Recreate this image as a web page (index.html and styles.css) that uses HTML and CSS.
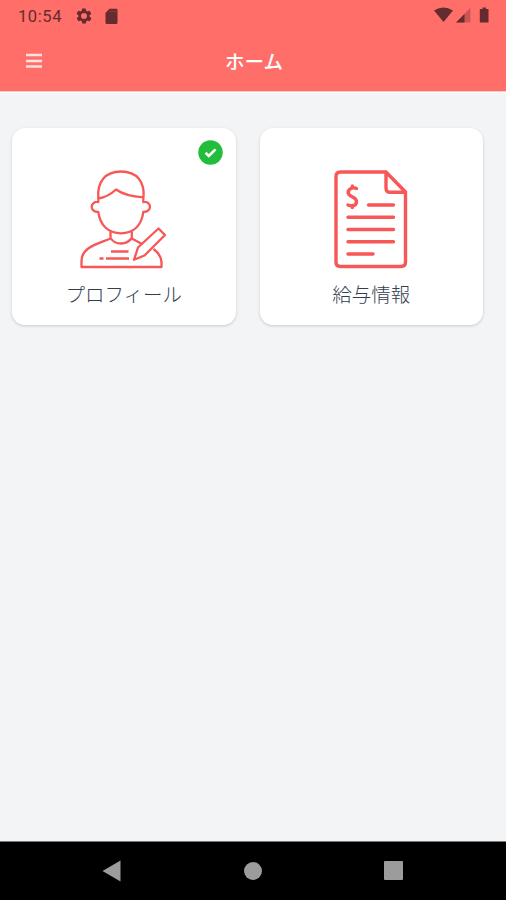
FILE: index.html
```html
<!DOCTYPE html>
<html lang="ja">
<head>
<meta charset="utf-8">
<title>ホーム</title>
<link rel="stylesheet" href="styles.css">
</head>
<body>
<div class="screen">
  <div class="status">
    <span class="time">10:54</span>
    <svg class="gear" width="18" height="18" viewBox="0 0 24 24"><path d="M19.4 13c0-.3.1-.6.1-1s0-.7-.1-1l2.1-1.600c.2-.2.3-.5.1-.7l-2-3.400c-.1-.2-.4-.3-.6-.2l-2.500 1c-.5-.4-1.100-.7-1.700-1l-.4-2.600c0-.3-.2-.5-.5-.5h-4c-.2 0-.4.2-.5.4l-.4 2.700c-.6.2-1.100.6-1.700 1l-2.500-1c-.2-.1-.5 0-.6.2l-2 3.400c-.1.200 0 .5.100.700L4.600 11c0 .3-.1.600-.1 1s0 .7.100 1l-2.100 1.600c-.2.200-.3.500-.1.700l2 3.400c.1.200.4.300.6.200l2.500-1c.5.400 1.100.7 1.700 1l.4 2.600c0 .300.200.500.500.500h4c.2 0 .5-.2.500-.5l.4-2.600c.6-.2 1.100-.6 1.700-1l2.500 1c.2.100.5 0 .6-.2l2-3.400c.1-.2.100-.5-.1-.7zM12 16a4 4 0 1 1 0-8 4 4 0 0 1 0 8z" fill-rule="evenodd"/></svg>
    <svg class="sd" width="13" height="17" viewBox="0 0 13 17"><path d="M4.500.800H11.200Q12.500.800 12.500 2V14.700Q12.500 16 11.200 16H1.800Q.500 16 .500 14.700V5z"/><path class="slots" d="M4.500 3.500H11.500"/></svg>
    <span class="spacer"></span>
    <svg width="56" height="18" viewBox="0 0 56 18">
      <path d="M0 3.500Q9.500-2.500 19 3.500L9.500 15z"/>
      <path class="dim" d="M36.300 1V15.500H22z"/><path d="M30.500 7V15.500H22z"/>
      <path d="M48.500.500H52V2H54.500V15.500H45.800V2H48.500z"/>
    </svg>
  </div>
  <header class="bar">
    <svg class="menu" width="16" height="16" viewBox="0 0 16 16"><path d="M0 2H16M0 8H16M0 13.500H16"/></svg>
    <h1>ホーム</h1>
  </header>
  <main class="cards">
    <section class="card">
      <svg class="art person" width="110" height="120" viewBox="0 0 110 120">
        <path d="M28.300 38C27 22 35 11.500 51 11.500S75 22 73.500 38M28.300 38.500Q38 37 46 29.500Q55 36 73.500 37.300M28.300 38V42C20 41 19 52 28.300 52C30 65 38 73.300 51 73.300S71.500 65 73.300 52C82.500 52 82 41 73.300 42V37"/>
        <path d="M40.500 71.500V78Q44 83.500 51 83.500T61.800 78V71.500M40.500 78.500C28 84 11.500 87 11.500 101V107H91.500V102Q91 94.500 83.500 89M61.800 78.500L72 84"/>
        <path d="M64 99.800L68 87.500L88.500 68.500L95 75L74.500 95.500Z"/>
        <path class="bars" d="M41 91.500H58.500M29.500 98.500H33.500M36 98.500H59"/>
      </svg>
      <p>プロフィール</p>
      <svg class="badge" width="25" height="25" viewBox="0 0 25 25"><circle cx="12.500" cy="12.500" r="12.200"/><path d="M7.500 12.800L10.800 16L17.500 9.300"/></svg>
    </section>
    <section class="card">
      <svg class="art paper" width="100" height="120" viewBox="0 0 100 120">
        <path d="M66 12H20.500Q16 12 16 16.500V102Q16 106.500 20.500 106.500H81Q85.500 106.500 85.500 102V32L66 12V28Q66 32.300 70.300 32.300H85"/>
        <path d="M48.500 45H73.500M28 57.300H73.500M28 69.500H73.500M28 81.800H73.500M28 94H53"/>
        <path d="M36.500 28.500C31 26 26.500 31 29 34.500C31 37.500 37 37 36.500 42C36 46.500 31 46.500 28 45M32.300 26V28M32.300 45.500V47.500"/>
      </svg>
      <p>給与情報</p>
    </section>
  </main>
  <nav class="nav">
    <svg width="20" height="22" viewBox="0 0 20 22"><path d="M.500 11L18.500.500V21.500z"/></svg>
    <svg width="18" height="18" viewBox="0 0 18 18"><circle cx="9" cy="9" r="9"/></svg>
    <svg width="19" height="19" viewBox="0 0 19 19"><rect width="19" height="19" rx="1"/></svg>
  </nav>
</div>
</body>
</html>
```
FILE: styles.css
```css
body { margin: 0; }
.screen {
  width: 506px;
  height: 900px;
  display: flex;
  flex-direction: column;
  background: #f2f4f6;
  font-family: "Noto Sans CJK JP", sans-serif;
}
svg { display: block; flex: none; }
.status {
  box-sizing: border-box;
  height: 32px;
  padding: 0 16px 0 18px;
  display: flex;
  align-items: center;
  background: #ff6e69;
  fill: #652b2e;
}
.time {
  width: 57px;
  font: 16.500px Roboto, sans-serif;
  letter-spacing: 0.600px;
  color: #652b2e;
}
.sd { margin-left: 12px; }
.slots { stroke: #a04443; stroke-width: 1.500; stroke-dasharray: 1 1; }
.spacer { flex: 1; }
.dim { opacity: 0.35; }
.bar {
  box-sizing: border-box;
  height: 60px;
  padding: 0 24px 2px 26px;
  display: grid;
  grid-template-columns: 16px 1fr 16px;
  align-items: center;
  background: #ff6e69;
  border-bottom: 1px solid #ffc9c7;
}
.menu { stroke: #ffe3e1; stroke-width: 2.400; }
h1 {
  margin: 0;
  text-align: center;
  font-size: 19.500px;
  line-height: 28px;
  font-weight: 500;
  color: #fff;
}
.cards {
  flex: 1;
  padding: 35px 23px 0 12px;
  display: grid;
  grid-template-columns: 1fr 1fr;
  gap: 24px;
  align-items: start;
  border-top: 1px solid #fff;
}
.card {
  position: relative;
  box-sizing: border-box;
  height: 197px;
  padding-top: 32px;
  display: flex;
  flex-direction: column;
  align-items: center;
  background: #fff;
  border-radius: 13px;
  box-shadow: 0 1px 3px rgba(50, 60, 70, 0.22);
}
.art {
  fill: none;
  stroke: #f75756;
  stroke-linejoin: round;
}
.person { stroke-width: 2.300; margin-left: 2px; }
.bars { stroke-width: 2.700; }
.paper { stroke-width: 3.400; stroke-linecap: round; margin-right: 3px; }
.card p {
  margin: -1px 0 0;
  font-size: 19.500px;
  line-height: 30px;
  font-weight: 300;
  color: #323e4e;
}
.badge {
  position: absolute;
  top: 12px;
  right: 13px;
  fill: #22bd3b;
}
.badge path { fill: none; stroke: #fff; stroke-width: 2.600; }
.nav {
  box-sizing: border-box;
  height: 59px;
  padding: 0 103px 1px 102px;
  display: flex;
  align-items: center;
  justify-content: space-between;
  background: #000;
  border-top: 1px solid #777;
  fill: #9c9c9c;
}
```
